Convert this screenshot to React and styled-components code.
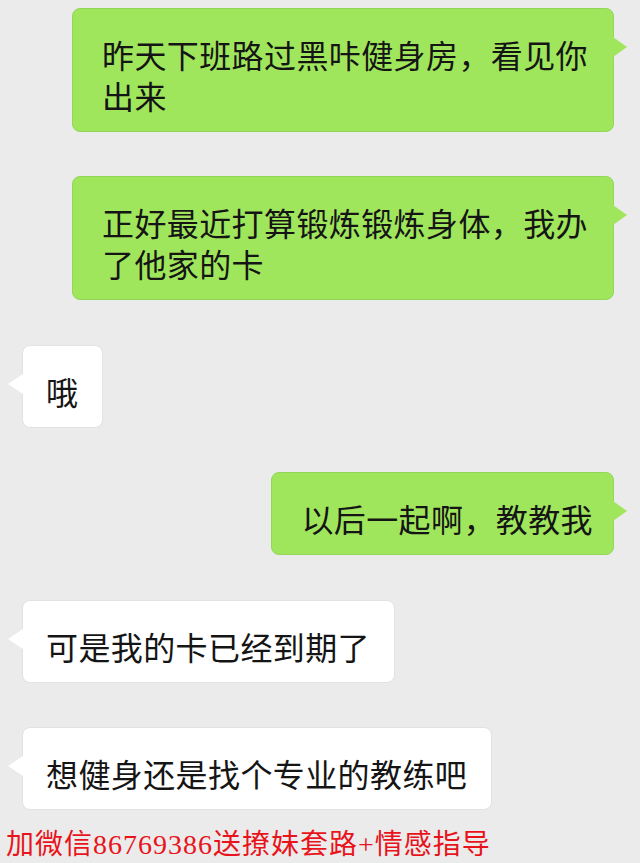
import styled, { createGlobalStyle } from "styled-components"

const Global = createGlobalStyle`
    html, body {
        margin: 0;
        padding: 0;
        background: #ebebeb;
        overflow: hidden;
    }
`

const Chat = styled.main`
    width: 640px;
    height: 863px;
    box-sizing: border-box;
    padding-top: 8px;
    display: flex;
    flex-direction: column;
    gap: 44.4px;
    font-family: "Noto Sans CJK SC", "Noto Sans", sans-serif;
`

const Row = styled.div`
    display: flex;
    justify-content: ${p => (p.$mine ? "flex-end" : "flex-start")};
    padding: ${p => (p.$mine ? "0 26px 0 0" : "0 0 0 22px")};
`

const Bubble = styled.div`
    position: relative;
    box-sizing: border-box;
    max-width: 542px;
    padding: ${p => (p.$mine ? "25px 20px 15px 29px" : "25px 24px 15px 23px")};
    border-radius: 8px;
    background: ${p => (p.$mine ? "#a0e65c" : "#ffffff")};
    border: 1px solid ${p => (p.$mine ? "#94d757" : "#e2e2e2")};
    color: #151515;
    font-size: 32px;
    line-height: 41px;
    letter-spacing: 0.4px;

    &::after {
        content: "";
        position: absolute;
        top: 28px;
        width: 0;
        height: 0;
        border-top: 10px solid transparent;
        border-bottom: 10px solid transparent;
        ${p =>
            p.$mine
                ? "right: -14px; border-left: 14px solid #a0e65c;"
                : "left: -15px; border-right: 15px solid #ffffff;"}
    }
`

const Promo = styled.p`
    margin: -23px 0 0 6px;
    color: #e8141c;
    font-family: "Liberation Serif", "Noto Sans CJK SC", serif;
    font-size: 28px;
    line-height: 28px;
    letter-spacing: 1px;
    white-space: nowrap;
`

const messages = [
    { mine: true, text: "昨天下班路过黑咔健身房，看见你出来" },
    { mine: true, text: "正好最近打算锻炼锻炼身体，我办了他家的卡" },
    { mine: false, text: "哦" },
    { mine: true, text: "以后一起啊，教教我" },
    { mine: false, text: "可是我的卡已经到期了" },
    { mine: false, text: "想健身还是找个专业的教练吧" },
]

export default function App() {
    return (
        <>
            <Global />
            <Chat>
                {messages.map((m, i) => (
                    <Row key={i} $mine={m.mine}>
                        <Bubble $mine={m.mine}>{m.text}</Bubble>
                    </Row>
                ))}
                <Promo>加微信86769386送撩妹套路+情感指导</Promo>
            </Chat>
        </>
    )
}
